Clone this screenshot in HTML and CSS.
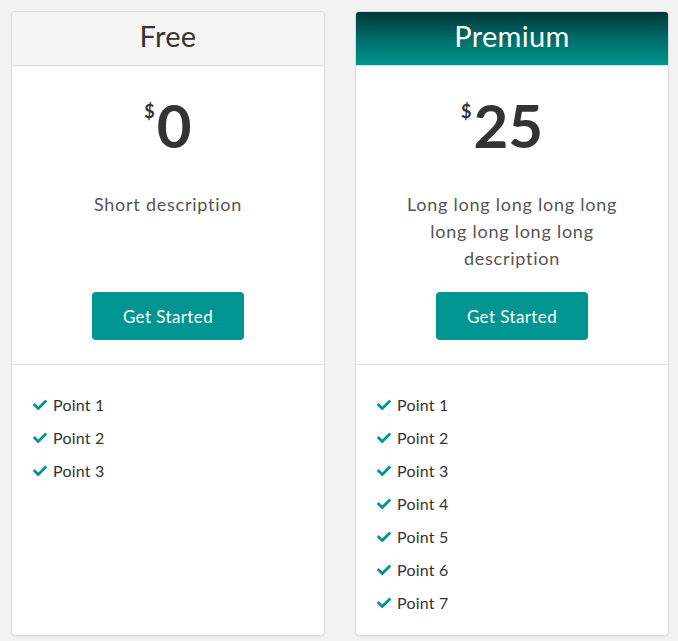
FILE: index.html
```html
<!DOCTYPE html>
<html>
<head>
<meta charset="utf-8">
<link rel="stylesheet" href="styles.css">
</head>
<body>
<div class="plans">
  <div class="card">
    <div class="head head-free">Free</div>
    <div class="top">
      <div class="price"><span class="cur">$</span>0</div>
      <p class="desc">Short description</p>
      <a class="btn">Get Started</a>
    </div>
    <ul class="points">
      <li><svg class="chk" viewBox="0 0 512 512"><path d="M173.9 439.4l-166.4-166.4c-10-10-10-26.2 0-36.2l36.2-36.2c10-10 26.2-10 36.2 0L192 312.7 432.1 72.6c10-10 26.2-10 36.2 0l36.2 36.2c10 10 10 26.2 0 36.2l-294.4 294.4c-10 10-26.2 10-36.2 0z"/></svg>Point 1</li>
      <li><svg class="chk" viewBox="0 0 512 512"><path d="M173.9 439.4l-166.4-166.4c-10-10-10-26.2 0-36.2l36.2-36.2c10-10 26.2-10 36.2 0L192 312.7 432.1 72.6c10-10 26.2-10 36.2 0l36.2 36.2c10 10 10 26.2 0 36.2l-294.4 294.4c-10 10-26.2 10-36.2 0z"/></svg>Point 2</li>
      <li><svg class="chk" viewBox="0 0 512 512"><path d="M173.9 439.4l-166.4-166.4c-10-10-10-26.2 0-36.2l36.2-36.2c10-10 26.2-10 36.2 0L192 312.7 432.1 72.6c10-10 26.2-10 36.2 0l36.2 36.2c10 10 10 26.2 0 36.2l-294.4 294.4c-10 10-26.2 10-36.2 0z"/></svg>Point 3</li>
    </ul>
  </div>
  <div class="card">
    <div class="head head-premium">Premium</div>
    <div class="top">
      <div class="price price-wide"><span class="cur">$</span>25</div>
      <p class="desc">Long long long long long long long long long description</p>
      <a class="btn">Get Started</a>
    </div>
    <ul class="points">
      <li><svg class="chk" viewBox="0 0 512 512"><path d="M173.9 439.4l-166.4-166.4c-10-10-10-26.2 0-36.2l36.2-36.2c10-10 26.2-10 36.2 0L192 312.7 432.1 72.6c10-10 26.2-10 36.2 0l36.2 36.2c10 10 10 26.2 0 36.2l-294.4 294.4c-10 10-26.2 10-36.2 0z"/></svg>Point 1</li>
      <li><svg class="chk" viewBox="0 0 512 512"><path d="M173.9 439.4l-166.4-166.4c-10-10-10-26.2 0-36.2l36.2-36.2c10-10 26.2-10 36.2 0L192 312.7 432.1 72.6c10-10 26.2-10 36.2 0l36.2 36.2c10 10 10 26.2 0 36.2l-294.4 294.4c-10 10-26.2 10-36.2 0z"/></svg>Point 2</li>
      <li><svg class="chk" viewBox="0 0 512 512"><path d="M173.9 439.4l-166.4-166.4c-10-10-10-26.2 0-36.2l36.2-36.2c10-10 26.2-10 36.2 0L192 312.7 432.1 72.6c10-10 26.2-10 36.2 0l36.2 36.2c10 10 10 26.2 0 36.2l-294.4 294.4c-10 10-26.2 10-36.2 0z"/></svg>Point 3</li>
      <li><svg class="chk" viewBox="0 0 512 512"><path d="M173.9 439.4l-166.4-166.4c-10-10-10-26.2 0-36.2l36.2-36.2c10-10 26.2-10 36.2 0L192 312.7 432.1 72.6c10-10 26.2-10 36.2 0l36.2 36.2c10 10 10 26.2 0 36.2l-294.4 294.4c-10 10-26.2 10-36.2 0z"/></svg>Point 4</li>
      <li><svg class="chk" viewBox="0 0 512 512"><path d="M173.9 439.4l-166.4-166.4c-10-10-10-26.2 0-36.2l36.2-36.2c10-10 26.2-10 36.2 0L192 312.7 432.1 72.6c10-10 26.2-10 36.2 0l36.2 36.2c10 10 10 26.2 0 36.2l-294.4 294.4c-10 10-26.2 10-36.2 0z"/></svg>Point 5</li>
      <li><svg class="chk" viewBox="0 0 512 512"><path d="M173.9 439.4l-166.4-166.4c-10-10-10-26.2 0-36.2l36.2-36.2c10-10 26.2-10 36.2 0L192 312.7 432.1 72.6c10-10 26.2-10 36.2 0l36.2 36.2c10 10 10 26.2 0 36.2l-294.4 294.4c-10 10-26.2 10-36.2 0z"/></svg>Point 6</li>
      <li><svg class="chk" viewBox="0 0 512 512"><path d="M173.9 439.4l-166.4-166.4c-10-10-10-26.2 0-36.2l36.2-36.2c10-10 26.2-10 36.2 0L192 312.7 432.1 72.6c10-10 26.2-10 36.2 0l36.2 36.2c10 10 10 26.2 0 36.2l-294.4 294.4c-10 10-26.2 10-36.2 0z"/></svg>Point 7</li>
    </ul>
  </div>
</div>
</body>
</html>
```
FILE: styles.css
```css
html, body {
  margin: 0;
  padding: 0;
  background: #f2f2f2;
  font-family: Lato, "Liberation Sans", sans-serif;
  color: #333;
}
.plans {
  display: flex;
  gap: 30px;
  padding: 11px 9px 5px 11px;
  align-items: stretch;
}
.card {
  width: 314px;
  box-sizing: border-box;
  background: #fff;
  border: 1px solid #dcdcdc;
  border-radius: 4px;
  box-shadow: 0 1px 2px rgba(0,0,0,0.06);
  overflow: hidden;
  display: flex;
  flex-direction: column;
}
.head {
  height: 54px;
  box-sizing: border-box;
  padding-bottom: 6px;
  display: flex;
  align-items: center;
  justify-content: center;
  font-size: 29px;
  letter-spacing: 0.3px;
  border-bottom: 1px solid #dcdcdc;
}
.head-free {
  background: #f5f5f5;
  color: #333;
}
.head-premium {
  background: linear-gradient(to bottom, #003838 0%, #00706c 55%, #009590 100%);
  color: #fff;
  border-bottom: 1px solid #bfe6e3;
}
.top {
  display: flex;
  flex-direction: column;
  align-items: center;
  padding: 29px 20px 24px;
  border-bottom: 1px solid #dcdcdc;
}
.price {
  font-size: 60px;
  font-weight: 700;
  line-height: 60px;
  color: #333;
  display: flex;
  align-items: flex-start;
}
.price-wide {
  padding-right: 20px;
}
.cur {
  font-size: 18px;
  line-height: 18px;
  margin-top: 7px;
  margin-right: 2px;
}
.desc {
  margin: 36px 0 0;
  min-height: 81px;
  font-size: 18px;
  line-height: 27px;
  letter-spacing: 0.75px;
  color: #555;
  text-align: center;
  width: 240px;
}
.btn {
  margin-top: 20px;
  width: 152px;
  height: 48px;
  border-radius: 4px;
  background: #009591;
  color: #fff;
  font-size: 17px;
  letter-spacing: 0.4px;
  display: flex;
  align-items: center;
  justify-content: center;
}
.points {
  list-style: none;
  margin: 0;
  padding: 23px 21px 16px;
}
.points li {
  display: flex;
  align-items: center;
  height: 33px;
  font-size: 16px;
  letter-spacing: 0.2px;
  color: #333;
}
.chk {
  width: 14px;
  height: 14px;
  fill: #009591;
  margin-right: 6px;
}
```
